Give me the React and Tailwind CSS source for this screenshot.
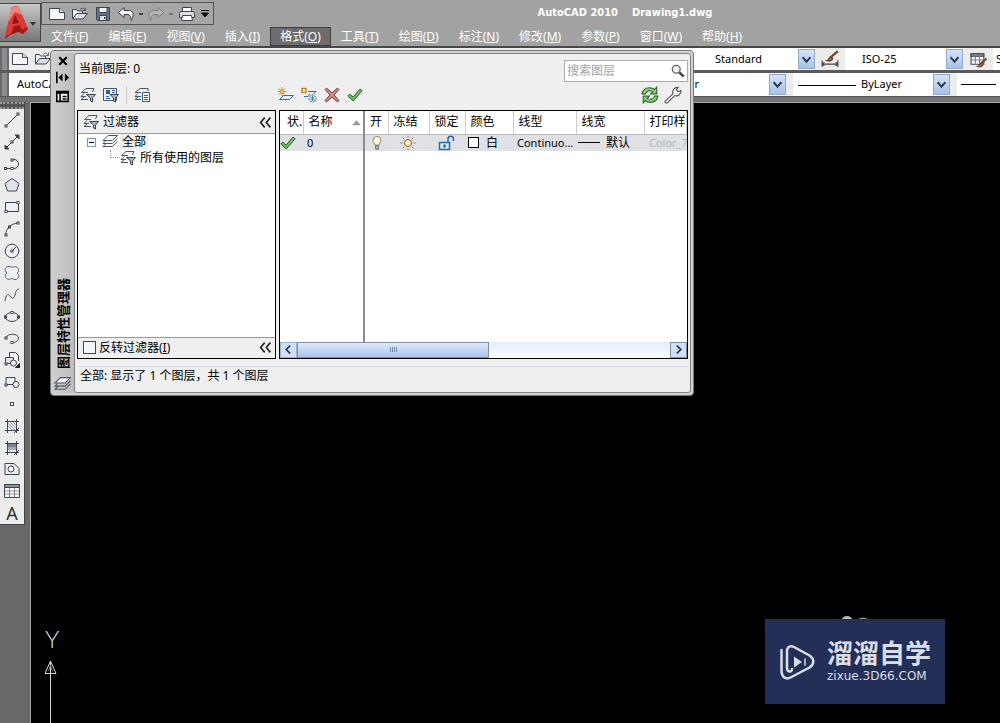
import React from 'react';
import clsx from 'clsx';

const menus = [
  ['文件', 'F'],
  ['编辑', 'E'],
  ['视图', 'V'],
  ['插入', 'I'],
  ['格式', 'O'],
  ['工具', 'T'],
  ['绘图', 'D'],
  ['标注', 'N'],
  ['修改', 'M'],
  ['参数', 'P'],
  ['窗口', 'W'],
  ['帮助', 'H'],
];

const Icon = ({ children, className = 'w-4 h-4' }) => (
  <svg viewBox="0 0 16 16" fill="none" stroke="#3d4450" strokeWidth="1" className={clsx('shrink-0', className)} aria-hidden="true">
    {children}
  </svg>
);

// small square grip used by the draw tools
const Node = ({ x, y }) => <rect x={x - 1} y={y - 1} width="2" height="2" fill="#fff" strokeWidth="1" />;

const NewIcon = () => (
  <Icon>
    <path d="M.5 2.500h10l5 4v7H.5z" fill="#f6f8fb" />
    <path d="M10.500 2.500v4h5" fill="#d4dae3" />
  </Icon>
);

const OpenIcon = () => (
  <Icon>
    <path d="M.5 13V3.500h4l1 1.500h5v2.500" fill="#f3f5f8" />
    <path d="M.5 13l4-5.500h11L11 13z" fill="#d9dfe8" />
    <path d="M8 3.500c2-2 4-1.500 5 .5M13.500 1.500V4.500H11" strokeWidth=".8" />
  </Icon>
);

const SaveIcon = () => (
  <Icon>
    <path d="M1.500 1.500h13v13h-12l-1-1z" fill="#657489" />
    <path d="M4 1.500h8v5H4z" fill="#eef1f5" />
    <path d="M4.500 9.500h7v5h-7z" fill="#dce1e8" />
    <path d="M9 11h1.500v2H9z" fill="#333a45" stroke="none" />
  </Icon>
);

const UndoIcon = ({ faded }) => (
  <Icon className={clsx('w-4 h-4', faded && '-scale-x-100')}>
    <path
      d="M.5 6.500L6 1.500v3h4c3.500 0 5.500 2 5 5.500-.2 2-1 3.500-2 4.500.5-4-1-6-4-6H6v3z"
      fill={faded ? '#b5b5b5' : '#fff'}
      stroke={faded ? '#7f7f7f' : '#333a45'}
    />
  </Icon>
);

const PrintIcon = () => (
  <Icon className="w-[18px] h-4">
    <path d="M3.500 1.500h9v5h-9z" fill="#fff" />
    <path d="M1.500 5.500h13l1 2v4h-15v-4z" fill="#dfe3e8" />
    <path d="M3.500 9.500h9l1 5h-11z" fill="#fff" />
  </Icon>
);

const LayerStack = ({ className }) => (
  <Icon className={className}>
    <path d="M6 1.500h9.500l-5 5H1z" fill="#f4f6f9" stroke="#4b5563" />
    <path d="M3.500 7L1 9.500h9.500l5-5M3.500 10L1 12.500h9.500l5-5" stroke="#4b5563" />
  </Icon>
);

const FilterLayers = () => (
  <Icon>
    <path d="M8 5.500H1.500L6 1.500h8l-1.500 3.500M4 6.500L1 9.500h5M4 10l-3 2.500h7" stroke="#4b5563" />
    <path d="M6.500 7.500h9L12.500 11v4l-2-1v-3z" fill="#aab4c1" />
  </Icon>
);

const FilterGroup = () => (
  <Icon>
    <path d="M.5 1.500h13v12H.5z" fill="#e8edf3" stroke="#4b5563" />
    <path d="M3 3h4v4H3z" fill="#2f5f9c" stroke="none" />
    <path d="M9 3.500h3M9 5.500h3M3 9.500h3M3 11.500h4" stroke="#2f5f9c" />
    <path d="M7 7.500h8.500L12.500 11v4l-2-1v-3z" fill="#aab4c1" />
  </Icon>
);

const LayerStates = () => (
  <Icon>
    <path d="M14 4V1.500H6L1 5.500H7M4 6.500L1 9.500h6M4 10l-3 2.500h6" stroke="#4b5563" />
    <path d="M8.500 5.500h7v9h-7z" fill="#fff" stroke="#2f5f9c" />
    <path d="M10 8.500h4M10 10.500h4M10 12.500h4" stroke="#2f5f9c" />
  </Icon>
);

const NewLayer = () => (
  <Icon>
    <path d="M5.500 8.500h10l-4 4h-10z" fill="#e8f1f8" stroke="#2b6ca3" />
    <path d="M4 0v9M-.5 4.500h9M1 1.500l6 6M7 1.500l-6 6" stroke="#c9831f" />
    <circle cx="4" cy="4.500" r="1.500" fill="#fff3c9" stroke="#c9831f" />
  </Icon>
);

const NewFrozenLayer = () => (
  <Icon>
    <path d="M1 1.500h4v4H1z" fill="#fff3c9" stroke="#c9831f" strokeWidth="1.500" />
    <path d="M7 4.500h8l-3 3M3 9.500h4l2-3" stroke="#2b6ca3" />
    <circle cx="11.500" cy="11.500" r="3.500" fill="#dcebf6" stroke="#2b6ca3" strokeDasharray="2 1" />
    <path d="M11.500 9v5M9.500 10l4 3M13.500 10l-4 3" stroke="#2b6ca3" strokeWidth=".8" />
  </Icon>
);

const DeleteIcon = () => (
  <Icon>
    <path d="M1 2.500l1.500-1.500L8 6l5.500-5L15 2.500 10 8l5 5.500-1.500 1.500L8 10l-5.500 5L1 13.500 6 8z" fill="#d98a8a" stroke="#6e3f3f" />
  </Icon>
);

const CheckIcon = () => (
  <Icon>
    <path d="M.8 9l2-2L6 10l7-8 2.200 1.800L6.200 14z" fill="#6cba5e" stroke="#2f6b2d" />
  </Icon>
);

const RefreshIcon = () => (
  <Icon className="w-[18px] h-[18px]">
    <path d="M1 7C1.500 3 4 1.500 7.500 1.500c2 0 3.500.5 4.500 1.500l2-2v6H8.500l2-2C8 3.500 5 4 4 7z" fill="#8dcc7c" stroke="#2f6b2d" />
    <path d="M15 9c-.5 4-3 5.500-6.500 5.500-2 0-3.500-.5-4.500-1.500l-2 2V9h5.500l-2 2c2.500 1.500 5.500 1 6.500-2z" fill="#8dcc7c" stroke="#2f6b2d" />
  </Icon>
);

const WrenchIcon = () => (
  <Icon className="w-[18px] h-[18px]">
    <path d="M1 13.500L8 7C7 4 9 1 12.500 1.200L11 3.500l1.500 1.700L15 4c.5 3-2.500 5.500-5.500 4.500L3 15c-1.500.5-2.500-.5-2-1.500z" fill="#f4f4f4" stroke="#555" />
  </Icon>
);

const drawTools = [
  ['直线', <><path d="M1.500 14.500l13-13" /><Node x={2} y={14} /><Node x={14} y={2} /></>],
  ['构造线', <><path d="M1 15L15 1" /><path d="M1 15v-4l4 4zM15 1v4l-4-4z" fill="#333a45" /><Node x={8} y={8} /></>],
  ['多段线', <><path d="M1.500 12.500h6M8 3.500h2c6 0 6 9 0 9H8" /><Node x={1.500} y={12.500} /><Node x={8} y={12.500} /><Node x={8} y={4} /></>],
  ['正多边形', <path d="M8 1.500l7 5-2.500 7.500h-9L1 6.500z" fill="#dfe4ec" />],
  ['矩形', <><path d="M1.500 3.500h13v9h-13z" fill="#eceff4" /><Node x={2} y={12.500} /><Node x={14} y={3.500} /></>],
  ['圆弧', <><path d="M1.500 14C2 7 7 2.500 14.500 2" /><Node x={2} y={14} /><Node x={5.500} y={6} /><Node x={14} y={2} /></>],
  ['圆', <><circle cx="8" cy="8" r="6.800" fill="#eceff4" /><path d="M8 8l4-4" /><Node x={8} y={8} /></>],
  ['修订云线', <path d="M3 8C-.5 5.500 1.500 1 5 1.500c1.500 0 2.500.5 3 1 1-1 6-1.500 6.500 2 .3 2-.5 3-1.500 3.500 3 1.500 2 6.500-2 6.500-1.500 0-2.500-.5-3-1.500-1 2-6 2-6.500-1.500C1 10 1.500 8.500 3 8z" fill="#eceff4" stroke="#59616e" />],
  ['样条曲线', <path d="M1 14c1-7 3-8 5-5s4 3 5-1 1.500-5.500 4-6" />],
  ['椭圆', <><ellipse cx="8" cy="8" rx="6.500" ry="4.500" /><Node x={1.500} y={8} /><Node x={14.500} y={8} /><Node x={8} y={3.500} /></>],
  ['椭圆弧', <><path d="M2 8c1-5 12.500-5 12.500 0 0 3-3 4.500-6 4.500" /><Node x={2} y={8} /><Node x={8} y={12.500} /></>],
  ['插入块', <><path d="M5.500 5V.5h6l3 3V9" fill="#fff" /><path d="M1.500 5.500h8v6h-8z" fill="#dfe4ec" /><circle cx="9.500" cy="11" r="3" fill="#eceff4" /><Node x={2} y={12} /><path d="M16 11v5h-5z" fill="#111" /></>],
  ['创建块', <><path d="M2 3.500h9v7H2z" fill="#eceff4" /><circle cx="12" cy="10.500" r="3" fill="#eceff4" /><Node x={2} y={11} /></>],
  ['点', <rect x="6.500" y="6.500" width="3" height="3" fill="#fff" />],
  ['图案填充', <><path d="M4 8l4 4M4 5l7 7M6 4l6 6M9 4l3 3" stroke="#8b93a0" strokeWidth=".8" /><path d="M3.500 1v14M12.500 1v14M1 3.500h14M1 12.500h14M10 15l5-5" /></>],
  ['渐变色', <><path d="M4 4h8v3H4z" fill="#7b8390" stroke="none" /><path d="M4 7h8v3H4z" fill="#a5acb8" stroke="none" /><path d="M3.500 1v14M12.500 1v14M1 3.500h14M1 12.500h14M10 15l5-5" /></>],
  ['面域', <><path d="M1 2.500h9l5 5v6H1z" fill="#eceff4" /><circle cx="7" cy="8" r="3" fill="#fff" /></>],
  ['表格', <><path d="M.5 1.500h15v13H.5z" fill="#fff" /><path d="M.5 1.500h15v3H.5z" fill="#8b93a0" /><path d="M1 8h14M1 11h14M5.500 5v9.500M10.500 5v9.500" stroke="#6b7280" strokeWidth=".8" /></>],
];

const ToolSelect = ({ label, value, className, textClass = 'pl-4', line }) => (
  <div className={clsx('relative flex items-stretch bg-white overflow-hidden shrink-0', className)}>
    <select aria-label={label} defaultValue={value} className={clsx('appearance-none w-full bg-white text-[11px] text-black outline-none', textClass)}>
      <option value={value}>{value}</option>
    </select>
    {line && <span className="absolute left-[5px] top-1/2 w-[58px] h-px bg-black" />}
    <span className="absolute right-0 inset-y-px w-[17px] flex items-center justify-center bg-linear-to-b from-[#d5e3f8] to-[#a9c2e8] border border-[#8fa9d0] pointer-events-none">
      <Icon className="w-[9px] h-[9px]"><path d="M1 4l7 8 7-8" stroke="#26384f" strokeWidth="3.500" /></Icon>
    </span>
  </div>
);

const Grip = () => <span className="w-[9px] shrink-0 border-x-2 border-[#6b6b6b] bg-[#8d8d8d]" />;

const Header = () => (
  <header className="flex bg-[#a2a2a2] border-b-2 border-[#474747] text-white">
    <button aria-label="应用程序菜单" className="mt-[3px] mb-[2px] w-[41px] h-[39px] flex items-center shrink-0 bg-linear-to-b from-[#c9c9c9] to-[#777] border border-l-0 border-[#444]">
      <svg viewBox="0 0 40 38" className="w-10 h-[38px]" aria-hidden="true">
        <path d="M12 3l6-1 10 23-5 5-5-2-8 3-5 4z" fill="#a81a17" />
        <path d="M12 3L5 32l6-2 3-8 6-1 2 5 5-3L18 2z" fill="#dc3a32" />
        <path d="M12 3l6-1 4 9-7-3-7 10z" fill="#f2857b" />
        <path d="M15 11l-3 9 7-1z" fill="#8d1412" />
        <path d="M5 32l6-2 3-6 6-1 2 3-8 3z" fill="#9b1714" />
        <path d="M30 18h6l-3 4z" fill="#333" />
      </svg>
    </button>
    <div className="flex-1 min-w-0">
      <div className="flex items-center h-[27px]">
        <div className="flex items-center h-[23px] w-[173px] pl-[7px] pr-1 justify-between border border-[#555] bg-[#a6a6a6] shrink-0">
          <button aria-label="新建"><NewIcon /></button>
          <button aria-label="打开" className="ml-[7px]"><OpenIcon /></button>
          <button aria-label="保存" className="ml-[7px]"><SaveIcon /></button>
          <button aria-label="放弃" className="flex items-center gap-[5px] ml-[7px]"><UndoIcon /><span className="w-1 h-[2px] bg-[#444]" /></button>
          <button aria-label="重做" className="flex items-center gap-[5px] ml-[5px]"><UndoIcon faded /><span className="w-1 h-[2px] bg-[#777]" /></button>
          <button aria-label="打印" className="ml-[5px]"><PrintIcon /></button>
          <button aria-label="自定义快速访问工具栏" className="ml-[5px]">
            <Icon className="w-2 h-2"><path d="M0 1h16M1 6h14l-7 8z" fill="#111" stroke="#111" strokeWidth="2" /></Icon>
          </button>
        </div>
        <h1 className="flex-1 flex justify-center gap-[14px] pl-9 font-['DejaVu_Sans_Condensed','Noto_Sans',sans-serif] text-[11px] font-bold whitespace-nowrap">
          <span>AutoCAD 2010</span>
          <span>Drawing1.dwg</span>
        </h1>
      </div>
      <nav className="flex h-[19px] text-[12px]">
        {menus.map(([name, key]) => (
          <button
            key={key}
            className={clsx(
              'px-[9px] border leading-[16px] whitespace-nowrap',
              key === 'O' ? 'bg-[#6d6d6d] border-[#3f3f3f]' : 'border-transparent'
            )}
          >
            {name}(<u>{key}</u>)
          </button>
        ))}
      </nav>
    </div>
  </header>
);

const Toolbars = () => (
  <div className="bg-[#5a5a5a]">
    <div className="flex h-[22px] bg-[#ececec] overflow-hidden">
      <Grip />
      <div className="flex items-center gap-[7px] pl-[3px]">
        <button aria-label="新建"><NewIcon /></button>
        <button aria-label="打开"><OpenIcon /></button>
      </div>
      <div className="flex ml-auto shrink-0">
        <ToolSelect label="文字样式" value="Standard" className="w-[175px]" textClass="pl-[75px]" />
        <button aria-label="标注样式" className="w-[30px] flex items-center justify-center">
          <Icon className="w-[18px] h-[18px]">
            <path d="M1 9v6M15 9v6M1 12.500h14M3 11l-2 1.500L3 14M13 11l2 1.500-2 1.500" />
            <path d="M15 1L8 7" stroke="#6b4a2d" strokeWidth="2" />
            <path d="M9 6c-2 0-2 3-4 3.500 3 1 5 0 5.500-2z" fill="#96613a" stroke="#6b4a2d" />
          </Icon>
        </button>
        <ToolSelect label="标注样式列表" value="ISO-25" className="w-[118px]" textClass="pl-[17px]" />
        <button aria-label="表格样式" className="w-[30px] flex items-center justify-center">
          <Icon className="w-[17px] h-[17px]">
            <path d="M1 2.500h12v10H1z" fill="#fff" />
            <path d="M1 2.500h12v2.500H1z" fill="#8b93a0" />
            <path d="M1 8.500h12M5 5v7M9 5v7" stroke="#777" />
            <path d="M15.500 7L10 12" stroke="#6b4a2d" strokeWidth="2" />
            <path d="M11 11c-2 0-2 3-4 3.500 3 1 5 0 5.500-2z" fill="#96613a" stroke="#6b4a2d" />
          </Icon>
        </button>
        <div className="w-[7px] bg-white text-[11px] leading-[22px] pl-[3px] overflow-hidden">S</div>
      </div>
    </div>
    <div className="flex mt-[3px] h-[23px] bg-[#ececec] overflow-hidden">
      <Grip />
      <ToolSelect label="工作空间" value="AutoCAD 经典" className="w-[170px]" textClass="pl-2" />
      <div className="flex ml-auto gap-[7px] shrink-0">
        <ToolSelect label="颜色" value="ByLayer" className="w-[185px]" textClass="pl-[57px]" />
        <ToolSelect label="线型" value="ByLayer" className="w-[157px]" textClass="pl-[68px]" line />
        <div className="w-[43px] bg-white flex items-center pl-1"><span className="w-[35px] h-px bg-black" /></div>
      </div>
    </div>
    <div className="h-[6px] bg-[#747474] border-t border-[#555]" />
  </div>
);

const DrawToolbar = () => (
  <aside className="w-[25px] self-start bg-[#ececec] border-r border-b border-[#444]">
    <div className="h-[7px] bg-[#555] border-y-2 border-dotted border-[#999]" />
    <div className="flex flex-col h-[415px]">
      {drawTools.map(([name, drawing]) => (
        <button key={name} aria-label={name} className="flex-1 flex items-center justify-center">
          <Icon>{drawing}</Icon>
        </button>
      ))}
      <button aria-label="多行文字" className="flex-1 flex items-center justify-center text-[18px] leading-[20px] text-[#333]">A</button>
    </div>
  </aside>
);

const DoubleChevron = () => (
  <Icon className="w-[13px] h-[13px]"><path d="M7 2L2 8l5 6M14 2L9 8l5 6" stroke="#222" strokeWidth="2" /></Icon>
);

const FilterPane = () => (
  <section className="w-[199px] flex flex-col bg-white border border-black shrink-0">
    <div className="flex items-center h-[23px] pl-[5px] pr-[3px] bg-[#efefef] border-b border-[#999]">
      <FilterLayers />
      <span className="ml-1">过滤器</span>
      <button aria-label="收拢过滤器树" className="ml-auto"><DoubleChevron /></button>
    </div>
    <ul className="flex-1">
      <li>
        <div className="flex items-center h-4 pl-[9px]">
          <span className="w-[9px] h-[9px] flex items-center justify-center border border-[#7b93b5] bg-white"><span className="w-[5px] h-px bg-black" /></span>
          <LayerStack className="w-4 h-4 ml-[6px]" />
          <span className="ml-[2px] px-[2px] leading-[16px] bg-[#efefef]">全部</span>
        </div>
        <ul>
          <li className="flex items-center h-4 pl-8">
            <span className="w-[10px] h-2 mb-2 border-l border-b border-dotted border-[#999]" />
            <FilterLayers />
            <span className="ml-1 leading-[16px]">所有使用的图层</span>
          </li>
        </ul>
      </li>
    </ul>
    <div className="flex items-center h-[21px] pl-[5px] pr-[3px] bg-[#efefef] border-t border-[#999]">
      <label className="flex items-center gap-[3px]">
        <input type="checkbox" className="appearance-none w-[13px] h-[13px] bg-[#f4f7fa] border border-[#1f4f7f]" />
        <span>反转过滤器(<u>I</u>)</span>
      </label>
      <button aria-label="收拢" className="ml-auto"><DoubleChevron /></button>
    </div>
  </section>
);

const columns = ['状.', '名称', '开', '冻结', '锁定', '颜色', '线型', '线宽', '打印样式'];

const LayerTable = () => (
  <section className="flex-1 min-w-0 flex flex-col bg-white border border-black overflow-hidden">
    <table className="table-fixed w-full flex-1 border-collapse">
      <colgroup>
        <col className="w-[23px]" />
        <col className="w-[61px]" />
        <col className="w-[24px]" />
        <col className="w-[41px]" />
        <col className="w-[36px]" />
        <col className="w-[48px]" />
        <col className="w-[63px]" />
        <col className="w-[68px]" />
        <col />
      </colgroup>
      <thead>
        <tr className="h-[23px]">
          {columns.map((name, i) => (
            <th
              key={name}
              className={clsx(
                'p-0 font-normal text-left whitespace-nowrap overflow-hidden border-b border-b-[#bbb]',
                i === 0 ? 'pl-[7px]' : 'pl-[5px]',
                i === 1 ? 'border-r-2 border-r-[#8a8a8a]' : 'border-r border-r-[#ccc]'
              )}
            >
              <span className="flex items-center justify-between">
                {name}
                {i === 1 && <Icon className="w-[9px] h-[9px] mr-[2px]"><path d="M0 13L8 4l8 9z" fill="#999" stroke="none" /></Icon>}
              </span>
            </th>
          ))}
        </tr>
      </thead>
      <tbody>
        <tr className="h-4 bg-[#dfe1e6] [&>td]:p-0 [&>td]:whitespace-nowrap [&>td]:overflow-hidden [&>td]:leading-[16px]">
          <td><CheckIcon /></td>
          <td className="border-r-2 border-[#8a8a8a] text-[11px]"><span className="pl-1">0</span></td>
          <td>
            <Icon className="w-[14px] h-[14px] mx-auto">
              <path d="M6 10.500C5.500 8.500 3.500 7.500 3.500 5a4.500 4.500 0 019 0c0 2.500-2 3.500-2.500 5.500z" fill="#fffbe0" stroke="#8a7a3d" />
              <path d="M6.500 11h3v4h-3z" fill="#ccc" stroke="#555" />
            </Icon>
          </td>
          <td>
            <Icon className="w-4 h-4 ml-3">
              <circle cx="8" cy="8" r="3.500" fill="#fff0b8" stroke="#7a6544" />
              <path d="M8 .5v2M8 13.500v2M.5 8h2M13.500 8h2M2.700 2.700l1.500 1.500M11.800 11.800l1.500 1.500M13.300 2.700l-1.500 1.500M4.200 11.800l-1.500 1.500" stroke="#a8743a" />
            </Icon>
          </td>
          <td>
            <Icon className="w-[17px] h-4 ml-[9px]">
              <path d="M9.500 7V4a2.700 2.700 0 015.400 0v2" stroke="#2b6ca3" strokeWidth="1.500" />
              <path d="M1 7.500h10v7H1z" fill="#d3e6f6" stroke="#2b6ca3" strokeWidth="1.500" />
              <path d="M6 9.500v3" stroke="#1d4c79" strokeWidth="2" />
            </Icon>
          </td>
          <td>
            <span className="flex items-center gap-[7px] pl-[3px]">
              <span className="w-[11px] h-[11px] border border-black bg-white" />白
            </span>
          </td>
          <td className="text-[11px]"><span className="pl-1">Continuo...</span></td>
          <td>
            <span className="flex items-center gap-[6px] pl-[2px]"><span className="w-[22px] h-px bg-black" />默认</span>
          </td>
          <td className="text-[11px] text-[#b3b5ba]"><span className="pl-[5px]">Color_7</span></td>
        </tr>
        <tr className="h-[191px]">
          <td />
          <td className="border-r-2 border-[#8a8a8a]" />
          <td colSpan={7} />
        </tr>
      </tbody>
    </table>
    <div className="flex h-4 bg-linear-to-b from-[#e3edfb] to-[#fbfdff] shrink-0">
      <button aria-label="向左滚动" className="w-[17px] flex items-center justify-center border border-[#9ab0cf] bg-[#cfdff6]">
        <Icon className="w-[9px] h-[9px]"><path d="M11 1L4 8l7 7" stroke="#26384f" strokeWidth="3" /></Icon>
      </button>
      <span className="w-[192px] flex items-center justify-center gap-px border border-[#7f8ea5] bg-linear-to-b from-[#dfeafb] to-[#a9c4ea]">
        {[0, 1, 2, 3].map((n) => <span key={n} className="w-px h-[5px] bg-[#6f8ab5]" />)}
      </span>
      <button aria-label="向右滚动" className="ml-auto w-[17px] flex items-center justify-center border border-[#7f8ea5] bg-[#cfdff6]">
        <Icon className="w-[9px] h-[9px]"><path d="M5 1l7 7-7 7" stroke="#26384f" strokeWidth="3" /></Icon>
      </button>
    </div>
  </section>
);

const LayerPalette = () => (
  <div role="dialog" aria-label="图层特性管理器" className="absolute left-[50px] top-[50px] w-[644px] flex p-[2px] pl-0 rounded-[4px] border border-[#777] bg-[#d2d2d2] text-[12px] text-black">
    <div className="w-[23px] flex flex-col items-center pt-[2px] bg-linear-to-r from-[#cfcfcf] to-[#bdbdbd]">
      <button aria-label="关闭" className="h-[12px]"><Icon className="w-[10px] h-[10px]"><path d="M2 2l12 12M14 2L2 14" stroke="#000" strokeWidth="3.500" /></Icon></button>
      <button aria-label="自动隐藏" className="mt-1"><Icon className="w-[13px] h-[13px]"><path d="M1 1v14" strokeWidth="2" stroke="#000" /><path d="M8 3v10L3 8zM11 3v10l5-5z" fill="#000" stroke="none" /></Icon></button>
      <button aria-label="特性" className="mt-[6px]"><Icon className="w-[13px] h-[13px]"><path d="M1 2h14v12H1z" fill="#fff" stroke="#000" strokeWidth="2" /><path d="M1 3.500h14M5 4v10M8 8h5M8 11h5" stroke="#000" strokeWidth="2" /></Icon></button>
      <span className="mt-auto mb-[6px] font-bold text-[13px] leading-[16px] [writing-mode:vertical-rl] [text-orientation:sideways] rotate-180">图层特性管理器</span>
      <LayerStack className="w-[17px] h-[17px]" />
    </div>
    <div className="flex-1 min-w-0 rounded-[3px] border border-[#808080] bg-[#efefef] px-[2px]">
      <div className="flex items-start justify-between h-[31px] pt-[6px] pl-[2px]">
        <span className="leading-[18px]">当前图层: 0</span>
        <div className="flex items-center w-[124px] h-[22px] bg-white border border-[#aaa] pr-[2px]">
          <input type="text" aria-label="搜索图层" placeholder="搜索图层" className="flex-1 min-w-0 pl-[2px] bg-transparent outline-none placeholder:text-[#a3a3a3]" />
          <Icon className="w-[14px] h-[14px]">
            <circle cx="6" cy="6" r="4.500" fill="#eef3f8" stroke="#666" strokeWidth="1.500" />
            <path d="M9.500 9.500l5 5" stroke="#444" strokeWidth="3" />
          </Icon>
        </div>
      </div>
      <div className="flex items-center h-[25px] pl-[3px] pr-[6px] pb-[6px]">
        <div className="flex items-center gap-[7px] w-[198px]">
          <button aria-label="新建特性过滤器"><FilterLayers /></button>
          <button aria-label="新建组过滤器"><FilterGroup /></button>
          <span className="w-px h-[18px] bg-[#ccc]" />
          <button aria-label="图层状态管理器"><LayerStates /></button>
        </div>
        <div className="flex items-center gap-[7px]">
          <button aria-label="新建图层"><NewLayer /></button>
          <button aria-label="新建冻结图层"><NewFrozenLayer /></button>
          <button aria-label="删除图层"><DeleteIcon /></button>
          <button aria-label="置为当前"><CheckIcon /></button>
        </div>
        <div className="flex items-center gap-[5px] ml-auto">
          <button aria-label="刷新"><RefreshIcon /></button>
          <button aria-label="设置"><WrenchIcon /></button>
        </div>
      </div>
      <div className="flex gap-[3px]">
        <FilterPane />
        <LayerTable />
      </div>
      <div className="mt-[7px] h-[26px] pl-[3px] border-t border-[#dcdce6] leading-[18px]">全部: 显示了 1 个图层，共 1 个图层</div>
    </div>
  </div>
);

const UcsMarker = () => (
  <div className="absolute left-[13px] bottom-0 flex flex-col items-start text-[#d8d8d8]">
    <span className="font-['Lato',sans-serif] font-light text-[24px] leading-[24px] pl-[1px]">Y</span>
    <svg viewBox="0 0 13 66" fill="none" stroke="currentColor" className="w-[13px] h-[66px] mt-[6px]" aria-hidden="true">
      <path d="M6.500 4v62M6.500 4L1 16.500h11z" />
      <path d="M6.500 8l-2 6M6.500 8l2 6" stroke="#777" />
    </svg>
  </div>
);

const Watermark = () => (
  <div className="absolute right-[55px] bottom-[19px] w-[180px] flex flex-col">
    <svg viewBox="0 0 180 3" className="w-full h-[3px]" aria-hidden="true">
      <ellipse cx="82" cy="3" rx="5" ry="3" fill="#b9b7b0" />
      <ellipse cx="98" cy="3" rx="4" ry="1.500" fill="#8a8983" />
    </svg>
    <div className="flex items-center gap-[11px] h-[85px] pl-[15px] bg-[#232f57] text-[#d9dde6]">
      <svg viewBox="0 0 36 38" fill="none" stroke="currentColor" strokeWidth="2.500" strokeLinecap="round" className="w-9 h-[38px] shrink-0" aria-hidden="true">
        <path d="M1.500 7v20c0 7 4 10 9 7.500l19-10c5-3 5-9 0-12L14 4C10.500 2 7 4 7 8v17c0 4 5 5 5 1" />
        <path d="M14 13.500v11l8-5.500z" fill="currentColor" stroke="none" />
        <path d="M25 16v6" strokeWidth="1.500" />
      </svg>
      <div className="flex flex-col pb-1 whitespace-nowrap">
        <span className="text-[26px] leading-[32px] font-bold">溜溜自学</span>
        <span className="font-['DejaVu_Sans',sans-serif] text-[12px] leading-[14px]">zixue.3D66.COM</span>
      </div>
    </div>
  </div>
);

const App = () => {
  return (
    <div className="relative min-h-screen flex flex-col overflow-hidden bg-[#686868] font-['Noto_Sans','Noto_Sans_CJK_SC',sans-serif]">
      <Header />
      <Toolbars />
      <div className="flex-1 flex">
        <DrawToolbar />
        <main className="relative flex-1 ml-[5px] bg-black border-l border-t border-[#a8a8a8]">
          <UcsMarker />
          <Watermark />
        </main>
      </div>
      <LayerPalette />
    </div>
  );
};

export default App;
